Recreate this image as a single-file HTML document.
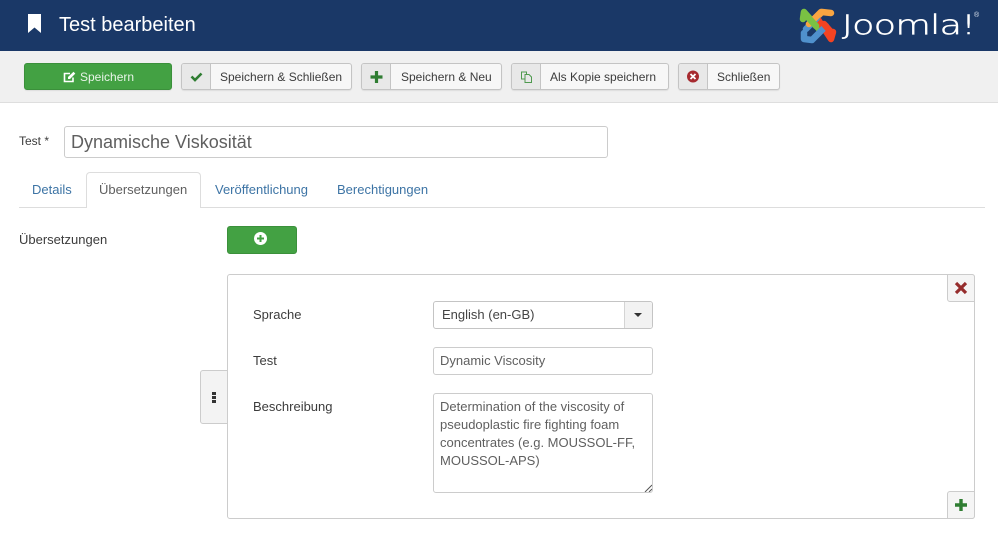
<!DOCTYPE html>
<html lang="de"><head><meta charset="utf-8"><title>Test bearbeiten</title>
<style>
*{box-sizing:border-box}
html,body{margin:0;padding:0;width:998px;height:535px;overflow:hidden;background:#fff;font-family:"Liberation Sans",sans-serif;color:#3c3c3c;font-size:13px}
.a{position:absolute;white-space:nowrap}
.btn{position:absolute;top:63px;height:27px;border:1px solid #c4c4c4;border-radius:3px;background:#f7f7f7;box-shadow:0 1px 1px rgba(0,0,0,.08);font-size:12px;line-height:26px;color:#3c3c3c}
.btn i{position:absolute;left:0;top:0;width:29px;height:25px;background:#e8e8e8;border-right:1px solid #c4c4c4;border-radius:2px 0 0 2px}
.btn i svg{position:absolute;left:0;top:0}
.btn span{position:absolute;white-space:nowrap;top:0}
.lbl{position:absolute;white-space:nowrap;font-size:13px;line-height:18px;color:#3c3c3c}
.field{position:absolute;background:#fff;border:1px solid #ccc;border-radius:3px;color:#5f5f5f}
.tab{position:absolute;top:181px;font-size:13px;line-height:18px;color:#3d74a5;white-space:nowrap}
</style></head><body>
<div class="a" style="left:0;top:0;width:998px;height:51px;background:#1a3867"></div>
<svg class="a" style="left:27px;top:13px" width="15" height="20" viewBox="0 0 15 20"><path d="M1 1H14V20L7.500 14.500L1 20Z" fill="#fff"/></svg>
<div class="a" style="left:59px;top:13px;font-size:20px;line-height:25px;color:#fff">Test bearbeiten</div>
<svg class="a" style="left:798px;top:6px" width="40" height="39" viewBox="0 0 40 39" fill="none" stroke-linecap="round" stroke-linejoin="round">
<path d="M5 13L6 6L21 23" stroke="#7ac143" stroke-width="6.500"/>
<path d="M24 6L33 7M24 6L11 19" stroke="#f9a541" stroke-width="6.500"/>
<path d="M35 26L33 33L19 12" stroke="#f44321" stroke-width="6.500"/>
<path d="M14 34L6 33L6 27M14 34L28 20" stroke="#5091cd" stroke-width="6.500"/>
<path d="M8 23L19 12" stroke="#5091cd" stroke-width="6.500"/>
<path d="M23 6L11 18" stroke="#f9a541" stroke-width="6.500"/>
<path d="M6 7L18 20" stroke="#7ac143" stroke-width="6.500"/>
<path d="M26 18L33 26" stroke="#f44321" stroke-width="6.500"/>
</svg>
<div class="a" style="left:842px;top:6px;font-family:'DejaVu Sans',sans-serif;font-weight:200;font-size:27px;line-height:40px;letter-spacing:-.5px;color:#fff;-webkit-text-stroke:.5px #fff;transform-origin:left top;transform:scaleX(1.35)">Joomla!</div>
<div class="a" style="left:974px;top:12px;font-size:7px;line-height:8px;color:#dfe6f0">®</div>

<div class="a" style="left:0;top:51px;width:998px;height:52px;background:#f0f0f0;border-bottom:1px solid #dedede"></div>
<div class="btn" style="left:24px;width:148px;background:#43a143;border-color:#3b903b;color:#e8f4e8">
<svg class="a" style="left:38px;top:7px" width="13" height="12" viewBox="0 0 13 12" fill="none"><path d="M10 6.500V10.500H1.500V2.500H7" stroke="#fff" stroke-width="1.600"/><path d="M5 6L10.500 .8L12.300 2.600L7 8H5Z" fill="#fff"/></svg>
<span style="left:55px">Speichern</span></div>
<div class="btn" style="left:181px;width:171px"><i><svg width="29" height="25" viewBox="0 0 29 25" fill="none"><path d="M9.500 12.500L13 16L19.500 9.500" stroke="#2f7d32" stroke-width="2.600"/></svg></i><span style="left:38px">Speichern &amp; Schließen</span></div>
<div class="btn" style="left:361px;width:141px"><i><svg width="29" height="25" viewBox="0 0 29 25" fill="none"><path d="M14.500 7V19M8.500 13H20.500" stroke="#2f7d32" stroke-width="3.200"/></svg></i><span style="left:39px">Speichern &amp; Neu</span></div>
<div class="btn" style="left:511px;width:158px"><i><svg width="29" height="25" viewBox="0 0 29 25" fill="none" stroke="#4f9a4f" stroke-width="1"><path d="M9.500 8H14.500V15H9.500Z"/><path d="M13 10.500H17L19.500 13V18.500H13Z" fill="#e8e8e8"/></svg></i><span style="left:38px">Als Kopie speichern</span></div>
<div class="btn" style="left:678px;width:102px"><i><svg width="29" height="25" viewBox="0 0 29 25"><circle cx="14" cy="12.500" r="6" fill="#a62a2f"/><path d="M11.500 10L16.500 15M16.500 10L11.500 15" stroke="#fff" stroke-width="1.800"/></svg></i><span style="left:38px">Schließen</span></div>

<div class="lbl" style="left:19px;top:132px;font-size:12px">Test *</div>
<div class="field" style="left:64px;top:126px;width:544px;height:32px;font-size:18px;line-height:30px;padding-left:6px">Dynamische Viskosität</div>

<div class="a" style="left:19px;top:207px;width:966px;height:1px;background:#ddd"></div>
<div class="a" style="left:86px;top:172px;width:115px;height:36px;background:#fff;border:1px solid #ddd;border-bottom:0;border-radius:4px 4px 0 0"></div>
<div class="tab" style="left:32px">Details</div>
<div class="tab" style="left:99px;color:#5f5f5f">Übersetzungen</div>
<div class="tab" style="left:215px">Veröffentlichung</div>
<div class="tab" style="left:337px">Berechtigungen</div>

<div class="lbl" style="left:19px;top:231px">Übersetzungen</div>
<div class="a" style="left:227px;top:226px;width:70px;height:28px;background:#43a143;border:1px solid #3b903b;border-radius:3px"></div>
<svg class="a" style="left:254px;top:232px" width="13" height="13" viewBox="0 0 13 13"><circle cx="6.500" cy="6.500" r="6.500" fill="#fff"/><path d="M6.500 3V10M3 6.500H10" stroke="#43a143" stroke-width="2"/></svg>

<div class="a" style="left:200px;top:370px;width:28px;height:54px;background:#f3f3f3;border:1px solid #ccc;border-radius:3px 0 0 3px"></div>
<div class="a" style="left:212px;top:392px;width:4px;height:3px;background:#333;box-shadow:0 4px 0 #333,0 8px 0 #333"></div>
<div class="a" style="left:227px;top:274px;width:748px;height:245px;background:#fff;border:1px solid #ccc;border-radius:3px"></div>

<div class="a" style="left:947px;top:274px;width:28px;height:28px;background:#f5f5f5;border:1px solid #ccc;border-radius:0 3px 0 3px"></div>
<svg class="a" style="left:954px;top:281px" width="14" height="14" viewBox="0 0 14 14"><path d="M2 2L12 12M12 2L2 12" stroke="#962d2d" stroke-width="3.200"/></svg>

<div class="lbl" style="left:253px;top:306px">Sprache</div>
<div class="lbl" style="left:253px;top:352px">Test</div>
<div class="lbl" style="left:253px;top:398px">Beschreibung</div>

<div class="field" style="left:433px;top:301px;width:220px;height:28px;border-color:#c4c4c4;font-size:13px;line-height:26px;padding-left:8px;color:#444">English (en-GB)</div>
<div class="a" style="left:624px;top:302px;width:28px;height:26px;background:#f2f2f2;border-left:1px solid #d4d4d4;border-radius:0 3px 3px 0"></div>
<div class="a" style="left:634px;top:313px;width:0;height:0;border-left:4px solid transparent;border-right:4px solid transparent;border-top:4px solid #333"></div>

<div class="field" style="left:433px;top:347px;width:220px;height:28px;font-size:13px;line-height:26px;padding-left:6px">Dynamic Viscosity</div>
<div class="field" style="left:433px;top:393px;width:220px;height:100px;font-size:13px;line-height:18px;padding:4px 6px;white-space:pre">Determination of the viscosity of
pseudoplastic fire fighting foam
concentrates (e.g. MOUSSOL-FF,
MOUSSOL-APS)</div>
<svg class="a" style="left:644px;top:484px" width="8" height="8" viewBox="0 0 8 8"><path d="M1 8L8 1M5 8L8 5" stroke="#555" stroke-width="1"/></svg>

<div class="a" style="left:947px;top:491px;width:28px;height:28px;background:#f5f5f5;border:1px solid #ccc;border-radius:3px 0 3px 0"></div>
<svg class="a" style="left:954px;top:498px" width="14" height="14" viewBox="0 0 14 14"><path d="M7 1V13M1 7H13" stroke="#2f7d32" stroke-width="3.400"/></svg>
</body></html>
